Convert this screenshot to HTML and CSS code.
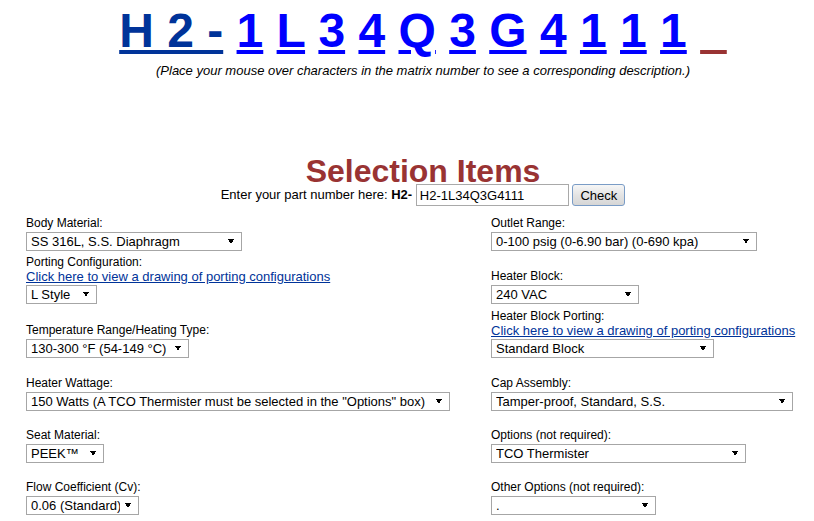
FILE: index.html
```html
<!DOCTYPE html>
<html lang="en">
  <head>
    <meta charset="UTF-8" />
    <meta name="viewport" content="width=device-width, initial-scale=1.0" />
    <title>H2 Regulator Configurator</title>
    <link rel="stylesheet" href="styles.css">
  </head>

  <body>
    <!-- Matrix number and part number entry -->
    <div class="header">
      <div class="matrix">
        <a href="#" class="prefix">H 2 -</a> <a href="#">1</a> <a href="#">L</a> <a href="#">3</a> <a href="#">4</a> <a href="#">Q</a> <a href="#">3</a> <a href="#">G</a> <a href="#">4</a> <a href="#">1</a> <a href="#">1</a> <a href="#">1</a> <span class="blank">&nbsp;&nbsp;</span>
      </div>
      <p class="note">(Place your mouse over characters in the matrix number to see a corresponding description.)</p>

      <h1>Selection Items</h1>
      <form class="part">Enter your part number here: <b>H2-</b> <input type="text" value="H2-1L34Q3G4111" /> <button type="button">Check</button></form>
    </div>

    <!-- Selection fields, two columns -->
    <div class="options">
      <div class="field">
        <label>Body Material:</label>
        <select class="w-body"><option>SS 316L, S.S. Diaphragm</option></select>
      </div>
      <div class="field">
        <label>Outlet Range:</label>
        <select class="w-outlet"><option>0-100 psig (0-6.90 bar) (0-690 kpa)</option></select>
      </div>

      <div class="field">
        <label>Porting Configuration:</label>
        <a href="#">Click here to view a drawing of porting configurations</a>
        <select class="w-port"><option>L Style</option></select>
      </div>
      <div class="field">
        <label>Heater Block:</label>
        <select class="w-block"><option>240 VAC</option></select>
      </div>

      <div class="field">
        <label>Temperature Range/Heating Type:</label>
        <select class="w-temp"><option>130-300 &deg;F (54-149 &deg;C)</option></select>
      </div>
      <div class="field">
        <label>Heater Block Porting:</label>
        <a href="#">Click here to view a drawing of porting configurations</a>
        <select class="w-blockport"><option>Standard Block</option></select>
      </div>

      <div class="field">
        <label>Heater Wattage:</label>
        <select class="w-watt"><option>150 Watts (A TCO Thermister must be selected in the "Options" box)</option></select>
      </div>
      <div class="field">
        <label>Cap Assembly:</label>
        <select class="w-cap"><option>Tamper-proof, Standard, S.S.</option></select>
      </div>

      <div class="field">
        <label>Seat Material:</label>
        <select class="w-seat"><option>PEEK&trade;</option></select>
      </div>
      <div class="field">
        <label>Options (not required):</label>
        <select class="w-opt"><option>TCO Thermister</option></select>
      </div>

      <div class="field">
        <label>Flow Coefficient (Cv):</label>
        <select class="w-flow"><option>0.06 (Standard)</option></select>
      </div>
      <div class="field">
        <label>Other Options (not required):</label>
        <select class="w-other"><option>.</option></select>
      </div>
    </div>
  </body>
</html>
```

FILE: styles.css
```css
/* Page */
body {
  margin: 8px;
  font-family: "Liberation Sans", Arial, sans-serif;
  color: #000;
  background-color: #fff;
}

/* Header block, centred */
.header {
  padding-left: 32px;
  text-align: center;
}

.matrix {
  font-size: 48px;
  font-weight: bold;
  line-height: 46px;
}

.matrix a {
  color: #0000ff;
  text-decoration: underline;
}

.matrix a.prefix {
  color: #003399;
}

.matrix .blank {
  color: #993333;
  text-decoration: underline;
}

.note {
  margin: 9px 0 0;
  font-size: 13px;
  font-style: italic;
  line-height: 15px;
}

h1 {
  margin: 81px 0 0;
  font-size: 32px;
  line-height: 25px;
  color: #993333;
}

/* Part number entry */
.part {
  margin: 0;
  height: 22px;
  font-size: 13px;
  line-height: 22px;
}

.part input {
  box-sizing: border-box;
  width: 153px;
  height: 22px;
  margin: 0;
  padding: 0 3px;
  border: 1px solid #a9a9a9;
  font: 13px "Liberation Sans", Arial, sans-serif;
  vertical-align: top;
}

.part button {
  box-sizing: border-box;
  height: 22px;
  margin: 0;
  padding: 0 7px;
  border: 1px solid #7a9cc6;
  border-radius: 3px;
  background: linear-gradient(#f6f6f6, #e4e4e4 50%, #d6d6d6);
  font: 13px "Liberation Sans", Arial, sans-serif;
  color: #000;
  vertical-align: top;
}

/* Selection fields */
.options {
  display: grid;
  grid-template-columns: 465px auto;
  grid-template-rows: auto 53px 54px 53px 52px 52px;
  margin-top: 10px;
  padding-left: 18px;
}

.field {
  display: flex;
  flex-direction: column;
  justify-content: flex-end;
  align-items: flex-start;
}

.field label {
  font-size: 12px;
  line-height: 14px;
}

.field label + select {
  margin-top: 2px;
}

.field a {
  font-size: 13px;
  line-height: 15px;
  color: #003399;
}

.field select {
  -webkit-appearance: none;
  appearance: none;
  box-sizing: border-box;
  height: 19px;
  margin: 1px 0 0;
  padding: 0 18px 0 4px;
  border: 1px solid #a6a6a6;
  border-radius: 0;
  font: 13px "Liberation Sans", Arial, sans-serif;
  color: #000;
  background-color: #fff;
  background-image: linear-gradient(to top right, transparent 50%, #000 50%),
    linear-gradient(to bottom right, #000 50%, transparent 50%);
  background-size: 3px 5px;
  background-position: right 10px center, right 7px center;
  background-repeat: no-repeat;
}

.w-body { width: 216px; }
.w-port { width: 71px; }
.w-temp { width: 163px; }
.w-watt { width: 424px; }
.w-seat { width: 78px; }
.w-flow { width: 113px; }
.w-outlet { width: 266px; }
.w-block { width: 148px; }
.w-blockport { width: 223px; }
.w-cap { width: 302px; }
.w-opt { width: 255px; }
.w-other { width: 165px; }
```
